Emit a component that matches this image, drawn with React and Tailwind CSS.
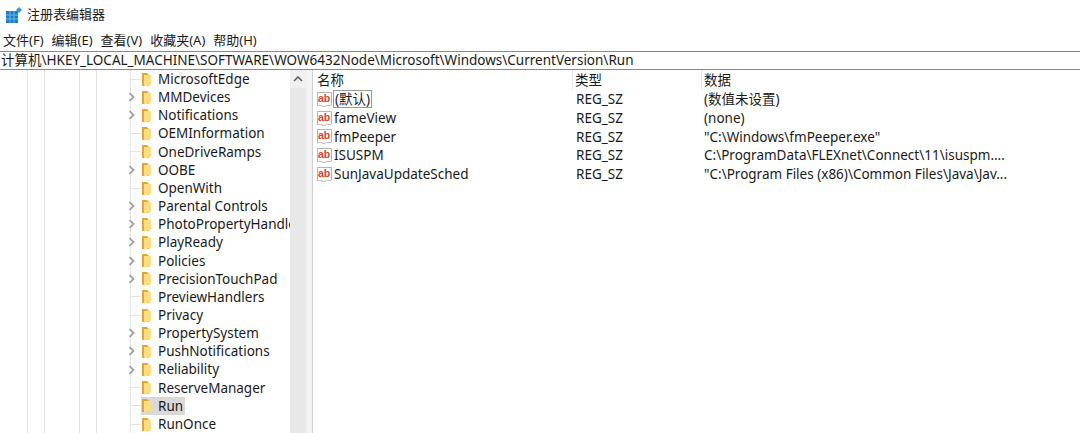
import React from 'react';

const treeItems = [
  { name: 'MicrosoftEdge', arrow: false },
  { name: 'MMDevices', arrow: true },
  { name: 'Notifications', arrow: true },
  { name: 'OEMInformation', arrow: false },
  { name: 'OneDriveRamps', arrow: false },
  { name: 'OOBE', arrow: true },
  { name: 'OpenWith', arrow: false },
  { name: 'Parental Controls', arrow: true },
  { name: 'PhotoPropertyHandler', arrow: true },
  { name: 'PlayReady', arrow: true },
  { name: 'Policies', arrow: true },
  { name: 'PrecisionTouchPad', arrow: true },
  { name: 'PreviewHandlers', arrow: false },
  { name: 'Privacy', arrow: false },
  { name: 'PropertySystem', arrow: true },
  { name: 'PushNotifications', arrow: true },
  { name: 'Reliability', arrow: true },
  { name: 'ReserveManager', arrow: false },
  { name: 'Run', arrow: false, selected: true },
  { name: 'RunOnce', arrow: false },
];

const values = [
  { name: '(默认)', data: '(数值未设置)', focus: true },
  { name: 'fameView', data: '(none)' },
  { name: 'fmPeeper', data: '"C:\\Windows\\fmPeeper.exe"' },
  { name: 'ISUSPM', data: 'C:\\ProgramData\\FLEXnet\\Connect\\11\\isuspm....' },
  { name: 'SunJavaUpdateSched', data: '"C:\\Program Files (x86)\\Common Files\\Java\\Jav...' },
];

const menus = ['文件(F)', '编辑(E)', '查看(V)', '收藏夹(A)', '帮助(H)'];

const font = "font-['Noto_Sans','Noto_Sans_CJK_SC',sans-serif]";

const AppIcon = () => (
  <svg width="16" height="16" viewBox="0 0 16 16" className="shrink-0">
    <rect x="0" y="4" width="12" height="12" fill="#1c7fc4" />
    <path d="M4 4v12M8 4v12M0 8h12M0 12h12" stroke="#7cc4ec" strokeWidth="0.8" />
    <path d="M13 0l3 3-3 3-3-3z" fill="#2f9bdc" />
  </svg>
);

const Folder = () => (
  <svg width="11" height="15" viewBox="0 0 11 15" className="shrink-0">
    <path d="M1 1h5l2 2v11H1z" fill="#e0a92e" />
    <path d="M3 3h7v10l-7 1.5z" fill="#fbdc87" />
  </svg>
);

const Chevron = () => (
  <svg width="8" height="10" viewBox="0 0 8 10" className="absolute left-[-3px] top-[4px] bg-white">
    <path d="M1.5 1l4 4-4 4" fill="none" stroke="#a3a3a3" strokeWidth="1.8" />
  </svg>
);

const RegIcon = () => (
  <svg width="17" height="17" viewBox="0 0 17 17" className="shrink-0">
    <path d="M1.5 1.5h14v12.5c-2 1.5-3 -0.5-5 0.5s-3 1.5-4.5 0.5-3-1-4.5 0z" fill="#fff" stroke="#b5b5b5" />
    <text x="2" y="11" fontSize="10.5" fontWeight="700" fill="#d8412f" fontFamily="Liberation Sans, sans-serif">ab</text>
  </svg>
);

const App = () => {
  return (
    <div className={`w-[1080px] h-[433px] bg-white overflow-hidden text-[13.5px] text-[#1a1a1a] ${font}`}>
      <div className="h-[30px] pl-[6px] flex items-center gap-[5px] text-[13px]">
        <AppIcon />
        <span>注册表编辑器</span>
      </div>
      <div className="h-[21px] pl-[3px] flex items-center gap-[8px] text-[13px]">
        {menus.map(m => <span key={m}>{m}</span>)}
      </div>
      <div className="h-[19px] pl-px flex items-center border-y border-[#8a8a8a] whitespace-nowrap">
        计算机\HKEY_LOCAL_MACHINE\SOFTWARE\WOW6432Node\Microsoft\Windows\CurrentVersion\Run
      </div>
      <div className="flex h-[363px]">
        {/* left tree */}
        <div className="w-[290px] flex overflow-hidden">
          <div className="w-[130px] flex shrink-0">
            <div className="w-[27px]" />
            <div className="w-[17px] border-l border-[#e4e4e4]" />
            <div className="w-[35px] border-l border-[#e4e4e4]" />
            <div className="w-[17px] border-l border-[#e4e4e4]" />
            <div className="w-[34px] border-l border-[#e4e4e4]" />
          </div>
          <div className="flex-1 min-w-0">
            {treeItems.map(item => (
              <div key={item.name} className="h-[18.16px] flex items-center whitespace-nowrap">
                <div className="relative w-[11px] h-full shrink-0 border-l border-[#e4e4e4] flex items-center">
                  {item.arrow ? <Chevron /> : <div className="w-full h-px bg-[#e4e4e4]" />}
                </div>
                <div className={`flex items-center h-full pr-[2px] ${item.selected ? 'bg-[#d9d9d9]' : ''}`}>
                  <Folder />
                  <span className="ml-[6px]">{item.name}</span>
                </div>
              </div>
            ))}
          </div>
        </div>
        {/* scrollbar */}
        <div className="w-[16px] bg-[#e8e8e8] flex flex-col shrink-0">
          <div className="h-[18px] bg-[#f0f0f0] flex items-center justify-center">
            <svg width="10" height="6" viewBox="0 0 10 6">
              <path d="M1 5l4-4 4 4" fill="none" stroke="#606060" strokeWidth="1.6" />
            </svg>
          </div>
        </div>
        <div className="w-[7px] bg-[#f3f3f3] border-r border-[#d0d0d0] shrink-0" />
        {/* values list */}
        <div className="flex-1 min-w-0">
          <div className="h-[20px] flex items-center">
            <div className="w-[260px] pl-[4px] border-r border-[#e4e4e4] h-full flex items-center">名称</div>
            <div className="w-[129px] pl-[2px] border-r border-[#e4e4e4] h-full flex items-center">类型</div>
            <div className="pl-[2px]">数据</div>
          </div>
          {values.map(v => (
            <div key={v.name} className="h-[18.7px] flex items-center whitespace-nowrap">
              <div className="w-[260px] pl-[3px] flex items-center">
                <RegIcon />
                <span className={v.focus ? 'border border-[#9a9a9a] px-px leading-[16px]' : 'ml-[1px]'}>{v.name}</span>
              </div>
              <div className="w-[129px] pl-[3px]">REG_SZ</div>
              <div className="pl-[2px]">{v.data}</div>
            </div>
          ))}
        </div>
      </div>
    </div>
  );
};

export default App;
